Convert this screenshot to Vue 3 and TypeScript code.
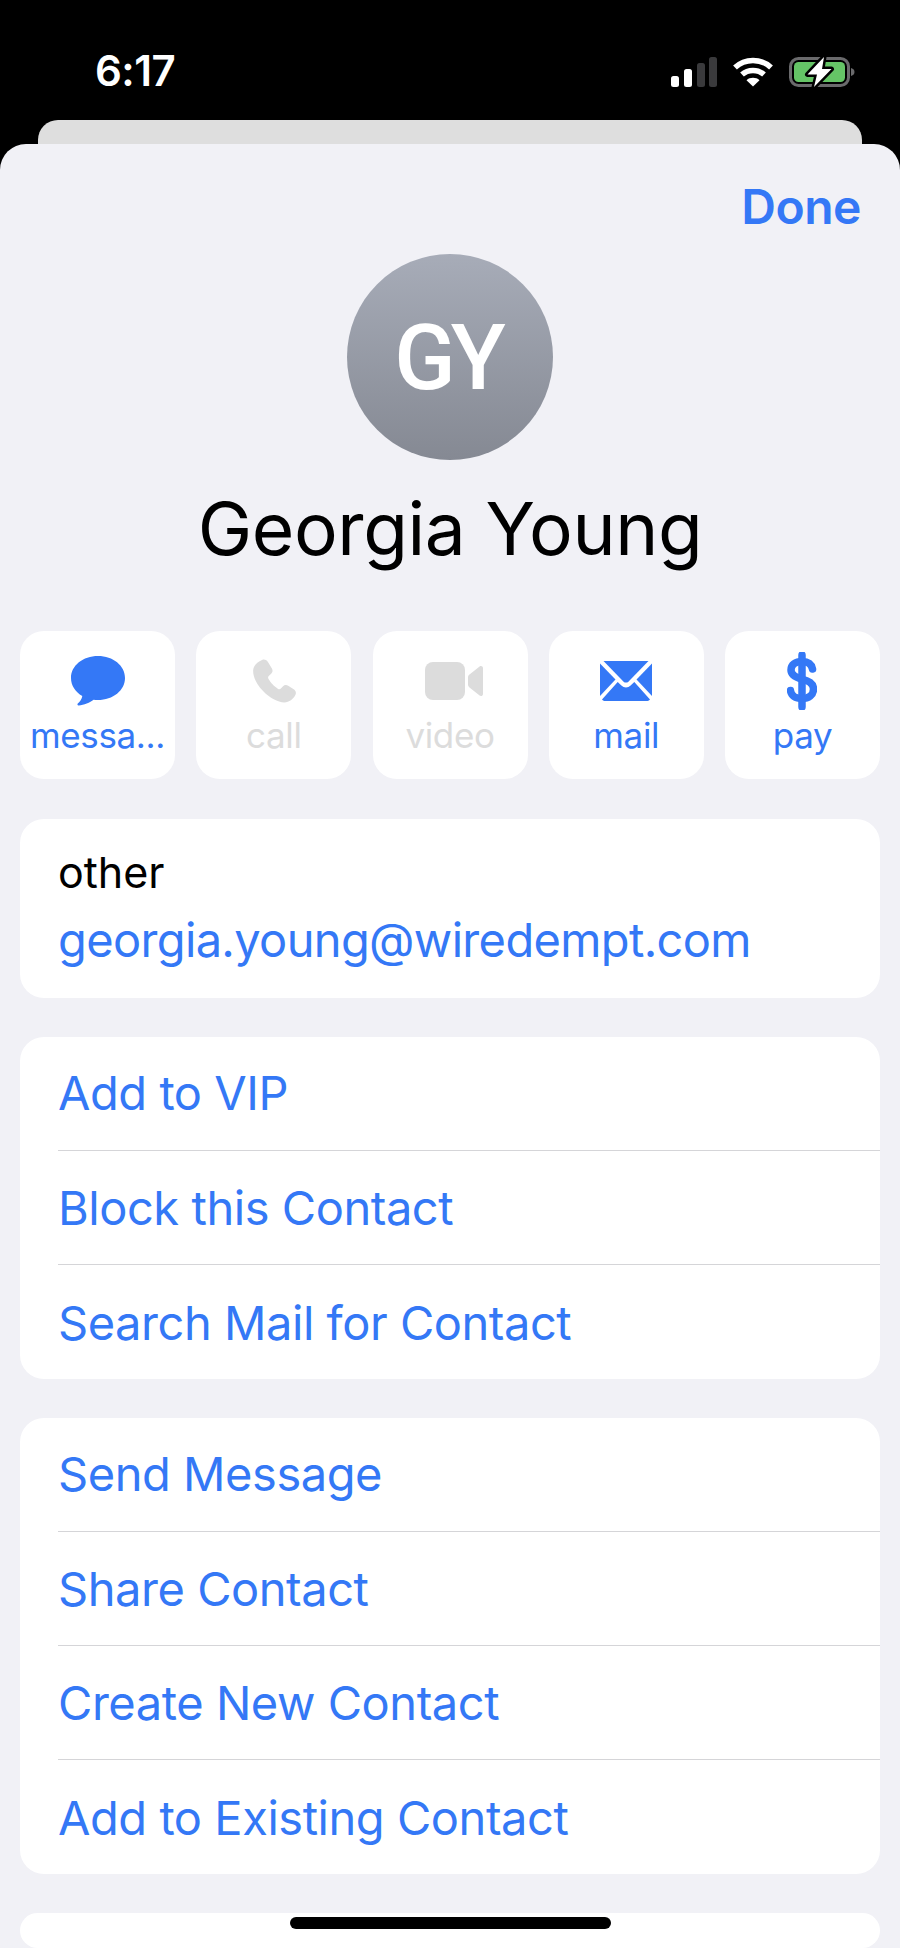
<template>
  <div class="screen">
    <header class="status">
      <span class="time">6:17</span>
      <div class="status-icons">
        <svg class="signal" width="46" height="30" viewBox="0 0 46 30">
          <rect x="0" y="19" width="8" height="11" rx="2.5" fill="#fff" />
          <rect x="13" y="12" width="8" height="18" rx="2.5" fill="#fff" />
          <rect x="26" y="6" width="8" height="24" rx="2.5" fill="#3a3a3c" />
          <rect x="38" y="0" width="8" height="30" rx="2.5" fill="#3a3a3c" />
        </svg>
        <svg class="wifi" width="40" height="30" viewBox="0 0 40 30" fill="none" stroke="#fff" stroke-width="5.500">
          <path d="M2 10.500C12 1 28 1 38 10.500" />
          <path d="M9 17.500C15 12 25 12 31 17.500" />
          <path d="M20 29.500L13.500 23.200C17 20 23 20 26.500 23.200Z" fill="#fff" stroke="none" />
        </svg>
        <svg class="battery" width="66" height="34" viewBox="0 0 66 34">
          <rect x="1.500" y="3.500" width="58" height="27" rx="8" fill="none" stroke="#6a6a6c" stroke-width="3" />
          <rect x="5" y="7" width="51" height="20" rx="4.500" fill="#65c466" />
          <path d="M62 13C64.500 13.800 65.500 15 65.500 17S64.500 20.200 62 21Z" fill="#6a6a6c" />
          <path d="M35 2L18.500 19.500H28L25 32L42.500 14H33Z" fill="#fff" stroke="#000" stroke-width="5" stroke-linejoin="round" paint-order="stroke" />
        </svg>
      </div>
    </header>
    <div class="back-card"></div>

    <main class="sheet">
      <div class="done-row"><span class="done">Done</span></div>
      <div class="avatar">GY</div>
      <h1 class="name">Georgia Young</h1>

      <div class="actions">
        <div v-for="a in actions" :key="a.label" class="action" :class="{ disabled: a.disabled }">
          <div class="action-icon">
            <svg v-if="a.icon === 'message'" width="54" height="50" viewBox="0 0 54 50">
              <path d="M27 0C12 0 0 9.600 0 22C0 29.500 4.400 36 11.300 40C10.800 43 9 45.800 6.800 47.600C6 48.300 6.600 49.600 7.700 49.400C13 48.800 19 46.600 22.600 43.700C24 43.900 25.500 44 27 44C42 44 54 34.400 54 22S42 0 27 0Z" />
            </svg>
            <svg v-else-if="a.icon === 'phone'" width="44" height="44" viewBox="0 0 46 46">
              <path d="M10.500 1C13 0 15 1 16.500 3L20.800 10C22 12 21.600 14 20 15.500L17.500 17.800C16.600 18.700 16.600 19.800 17.300 21C20.200 25.600 22.400 28 27 31C28.200 31.800 29.200 31.800 30.200 30.900L32.200 28.800C33.800 27.200 35.800 26.800 37.800 28L43.600 31.700C45.800 33.200 46.500 35.400 45.300 37.700C43.400 41.800 38.800 45.400 33.800 45.400C27 45.400 18.500 40.800 11.800 33.800C4.800 26.400 1 18.400 1.200 12C1.400 7 5.800 2.600 10.500 1Z" />
            </svg>
            <svg v-else-if="a.icon === 'video'" class="video" width="58" height="38" viewBox="0 0 58 38">
              <rect x="0" y="0" width="40" height="38" rx="8" />
              <path d="M43 15.500C43 14.300 43.500 13.400 44.500 12.600L54.600 4.400C56 3.300 58 4.200 58 6V32C58 33.800 56 34.700 54.600 33.600L44.500 25.400C43.500 24.600 43 23.700 43 22.500Z" />
            </svg>
            <svg v-else-if="a.icon === 'mail'" width="52" height="40" viewBox="0 0 52 40">
              <path d="M3.500 0H48.500L28.600 20.400C27 22 25 22 23.400 20.400Z" />
              <path d="M0 2.500L15.500 18.600L0 35Z" />
              <path d="M52 2.500L36.500 18.600L52 35Z" />
              <path d="M17.700 21L21.400 24.600C24 27.200 28 27.200 30.600 24.600L34.300 21L50 38.400C49 39.500 47.800 40 46.500 40H5.500C4.200 40 3 39.500 2 38.400Z" />
            </svg>
            <svg v-else class="dollar" width="30" height="58" viewBox="0 0 30 58" fill="none" stroke-width="7.500" stroke-linecap="round">
              <path d="M25.500 17C24.500 12 21 9.500 15 9.500C8.500 9.500 4 12.800 4 18C4 23.500 9 25.500 15 27C21.500 28.800 26.500 31 26.500 37C26.500 43 21.500 46.500 15 46.500C8.500 46.500 4 43.500 3.500 38.500" />
              <path d="M15 3V55" />
            </svg>
          </div>
          <span class="action-label">{{ a.label }}</span>
        </div>
      </div>

      <section class="card email">
        <div class="email-type">other</div>
        <div class="email-addr">georgia.young@wiredempt.com</div>
      </section>

      <section v-for="(group, i) in groups" :key="i" class="card">
        <div v-for="row in group" :key="row" class="row"><span>{{ row }}</span></div>
      </section>

      <section class="card tail"></section>
    </main>
    <div class="home-bar"></div>
  </div>
</template>

<script setup lang="ts">
interface Action {
  label: string;
  icon: string;
  disabled?: boolean;
}

const actions: Action[] = [
  { label: 'messa...', icon: 'message' },
  { label: 'call', icon: 'phone', disabled: true },
  { label: 'video', icon: 'video', disabled: true },
  { label: 'mail', icon: 'mail' },
  { label: 'pay', icon: 'pay' },
];

const groups: string[][] = [
  ['Add to VIP', 'Block this Contact', 'Search Mail for Contact'],
  ['Send Message', 'Share Contact', 'Create New Contact', 'Add to Existing Contact'],
];
</script>

<style>
html,
body {
  margin: 0;
  background: #000;
}
</style>

<style scoped>
.screen {
  position: relative;
  width: 900px;
  height: 1948px;
  overflow: hidden;
  background: #000;
  font-family: Inter, "Liberation Sans", sans-serif;
}

.status {
  height: 120px;
  box-sizing: border-box;
  padding: 47px 45px 0 95px;
  display: flex;
  justify-content: space-between;
  align-items: flex-start;
  color: #fff;
}

.time {
  font-size: 42px;
  font-weight: 600;
  line-height: 47px;
  letter-spacing: -0.5px;
}

.status-icons {
  display: flex;
  align-items: center;
  gap: 16px;
  margin-top: 8px;
}

.back-card {
  height: 24px;
  margin: 0 38px;
  background: #dedede;
  border-radius: 20px 20px 0 0;
}

.sheet {
  background: #f1f1f6;
  border-radius: 26px 26px 0 0;
  padding: 0 20px;
  height: 1804px;
  display: flex;
  flex-direction: column;
}

.done-row {
  height: 110px;
  display: flex;
  justify-content: flex-end;
  align-items: flex-start;
  padding-right: 19px;
}

.done {
  margin-top: 35px;
  font-size: 48px;
  line-height: 56px;
  font-weight: 600;
  letter-spacing: -0.5px;
  color: #3478f6;
}

.avatar {
  width: 206px;
  height: 206px;
  box-sizing: border-box;
  padding: 3px 5px 0 0;
  align-self: center;
  border-radius: 50%;
  background: linear-gradient(#a7acb8, #858993);
  color: #fff;
  font-family: Roboto, sans-serif;
  font-size: 90px;
  font-weight: 500;
  letter-spacing: -5px;
  display: flex;
  align-items: center;
  justify-content: center;
}

.name {
  margin: 28px 0 0;
  height: 143px;
  font-size: 73px;
  line-height: 82px;
  font-weight: 400;
  letter-spacing: -0.4px;
  text-align: center;
  color: #000;
}

.actions {
  display: grid;
  grid-template-columns: repeat(5, 155px);
  justify-content: space-between;
  height: 148px;
}

.action {
  background: #fff;
  border-radius: 24px;
  color: #3478f6;
  fill: #3478f6;
  display: flex;
  flex-direction: column;
  align-items: center;
}

.dollar {
  stroke: #3478f6;
  margin-right: 2px;
}

.video {
  margin-left: 7px;
}

.action.disabled {
  color: #dcdcdc;
  fill: #dcdcdc;
}

.action-icon {
  height: 78px;
  display: flex;
  align-items: center;
  justify-content: center;
  margin-top: 11px;
}

.action-label {
  font-size: 35px;
  line-height: 40px;
  letter-spacing: -0.35px;
  margin-top: -5px;
}

.card {
  background: #fff;
  border-radius: 24px;
  margin-top: 39px;
}

.email {
  height: 179px;
  margin-top: 40px;
  box-sizing: border-box;
  padding: 24px 38px 0;
}

.email-type {
  font-size: 43px;
  line-height: 58px;
  color: #000;
}

.email-addr {
  font-size: 47px;
  line-height: 78px;
  letter-spacing: -0.65px;
  color: #3478f6;
}

.row {
  height: 114px;
  margin-left: 38px;
  display: flex;
  align-items: center;
  font-size: 47px;
  letter-spacing: -0.45px;
  color: #3478f6;
  border-top: 1px solid #d5d5d8;
  box-sizing: border-box;
}

.row:first-child {
  height: 113px;
  padding-bottom: 2px;
  border-top: 0;
}

.row:last-child {
  height: 115px;
}

.tail {
  flex: 1;
}

.home-bar {
  position: absolute;
  left: 290px;
  top: 1917px;
  width: 321px;
  height: 12px;
  border-radius: 6px;
  background: #000;
}
</style>
